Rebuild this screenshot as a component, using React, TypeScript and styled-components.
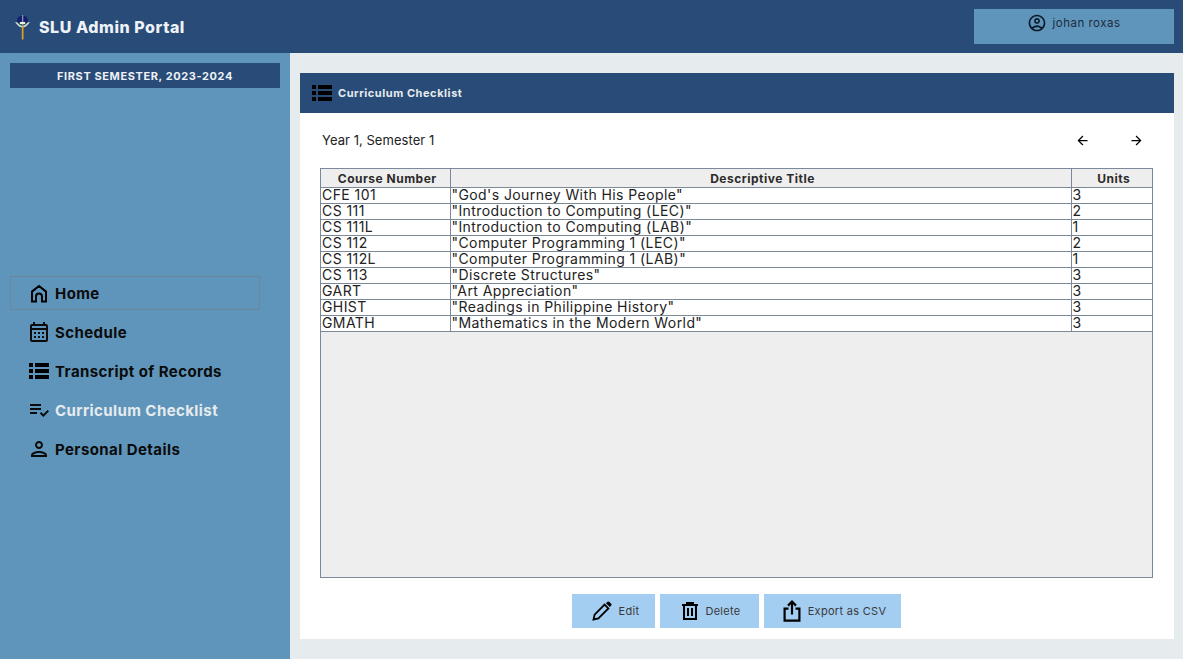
import React from "react";
import styled, { createGlobalStyle } from "styled-components";
import { MdOutlinePerson, MdOutlineAccountCircle, MdArrowBack, MdArrowForward, MdOutlineCalendarMonth, MdPlaylistAddCheck } from "react-icons/md";

const Global = createGlobalStyle`
  html, body { margin: 0; padding: 0; height: 100%; }
  body { font-family: "Inter", "Open Sans", "Liberation Sans", sans-serif; background: #e6ebee; color: #111; overflow: hidden; }
  * { box-sizing: border-box; }
`;

const Page = styled.div`
  width: 1183px;
  height: 659px;
  display: flex;
  flex-direction: column;
`;

const Header = styled.header`
  height: 53px;
  flex: none;
  background: #284b78;
  display: flex;
  align-items: center;
  justify-content: space-between;
  padding: 0 9px 0 14px;
`;

const Brand = styled.div`
  display: flex;
  align-items: center;
  gap: 8px;
  color: #eef2f6;
  font-size: 16px;
  font-weight: 800;
  letter-spacing: 0.55px;
`;

const UserBox = styled.div`
  width: 200px;
  height: 35px;
  background: #5f95ba;
  display: flex;
  align-items: center;
  justify-content: center;
  gap: 5px;
  font-size: 11.5px;
  color: #1b2a3a;
  padding-bottom: 8px;
  letter-spacing: 0.5px;
`;

const Body = styled.div`
  flex: 1;
  display: flex;
  min-height: 0;
`;

const Sidebar = styled.aside`
  width: 290px;
  flex: none;
  background: #5f95ba;
  padding: 10px;
  display: flex;
  flex-direction: column;
`;

const Term = styled.div`
  height: 25px;
  width: 270px;
  background: #284b78;
  color: #eef2f6;
  font-size: 11px;
  font-weight: 700;
  display: flex;
  align-items: center;
  justify-content: center;
  letter-spacing: 0.6px;
`;

const Nav = styled.nav`
  margin-top: 188px;
  display: flex;
  flex-direction: column;
  gap: 5px;
`;

const NavItem = styled.div<{ $active?: boolean; $boxed?: boolean }>`
  width: 250px;
  height: 34px;
  display: flex;
  align-items: center;
  gap: 4px;
  padding-left: 16px;
  font-size: 15px;
  font-weight: 700;
  letter-spacing: 0.42px;
  color: ${(p) => (p.$active ? "#e6ebee" : "#0b0b0b")};
  border: 1px solid ${(p) => (p.$boxed ? "#6d8699" : "transparent")};
`;

const NavIcon = styled.span`
  width: 24px;
  display: flex;
  align-items: center;
  justify-content: center;
  font-size: 24px;
  color: #0b0b0b;
`;

const Main = styled.main`
  flex: 1;
  padding: 20px 9px 20px 10px;
  display: flex;
  min-width: 0;
`;

const Card = styled.section`
  flex: 1;
  background: #fff;
  display: flex;
  flex-direction: column;
`;

const CardHeader = styled.div`
  height: 40px;
  flex: none;
  background: #284b78;
  display: flex;
  align-items: center;
  gap: 6px;
  padding-left: 12px;
  color: #e6ebee;
  font-size: 11px;
  font-weight: 700;
  letter-spacing: 0.55px;
`;

const CardBody = styled.div`
  flex: 1;
  padding: 0 21px 0 20px;
  display: flex;
  flex-direction: column;
  min-height: 0;
`;

const YearBar = styled.div`
  height: 55px;
  flex: none;
  display: flex;
  align-items: center;
  justify-content: space-between;
  padding: 0 9px 1px 2px;
  font-size: 13px;
  letter-spacing: 0.05px;
  color: #222;
`;

const Arrows = styled.div`
  display: flex;
  gap: 39px;
  font-size: 15px;
  color: #000;
`;

const ArrowBtn = styled.span`
  display: flex;
`;

const TableFrame = styled.div`
  height: 410px;
  flex: none;
  border: 1px solid #7b8a9b;
  background: #eeeeee;
`;

const Table = styled.table`
  width: 100%;
  border-collapse: collapse;
  table-layout: fixed;
  background: #fff;
`;

const Th = styled.th<{ $w?: number }>`
  width: ${(p) => (p.$w ? `${p.$w}px` : "auto")};
  height: 18px;
  padding: 1px 0 0 4px;
  background: #eeeeee;
  border: 1px solid #7b8a9b;
  border-top: 0;
  font-size: 12px;
  font-weight: 700;
  color: #2b2b2b;
  letter-spacing: 0.5px;
  &:first-child { border-left: 0; }
  &:last-child { border-right: 0; }
`;

const Td = styled.td`
  height: 16px;
  padding: 0 0 0 1px;
  font-size: 14px;
  letter-spacing: 0.42px;
  line-height: 14px;
  border: 1px solid #7b8a9b;
  white-space: nowrap;
  overflow: hidden;
  color: #222;
  &:first-child { border-left: 0; }
  &:last-child { border-right: 0; }
`;

const Actions = styled.div`
  flex: 1;
  display: flex;
  justify-content: center;
  align-items: flex-start;
  padding-top: 16px;
  gap: 5px;
`;

const ActionBtn = styled.button<{ $w: number }>`
  width: ${(p) => p.$w}px;
  height: 34px;
  border: 0;
  background: #a3cdf1;
  display: flex;
  align-items: center;
  justify-content: center;
  gap: 7px;
  font: inherit;
  font-size: 11px;
  color: #3a3a3a;
  padding: 0 0 0 4px;
  letter-spacing: 0.3px;
`;

const LogoMark = styled.svg`
  flex: none;
`;

const Stroke = styled.svg`
  display: block;
  flex: none;
  fill: none;
  stroke: #000;
`;

const ListGlyph = styled.svg`
  display: block;
  flex: none;
  fill: #000;
`;

const ListIcon = () => (
  <ListGlyph width="20" height="16" viewBox="0 0 20 16">
    <rect x="0" y="0" width="4" height="4" />
    <rect x="6" y="0" width="14" height="4" />
    <rect x="0" y="6" width="4" height="4" />
    <rect x="6" y="6" width="14" height="4" />
    <rect x="0" y="12" width="4" height="4" />
    <rect x="6" y="12" width="14" height="4" />
  </ListGlyph>
);

const HomeIcon = () => (
  <Stroke width="18" height="19" viewBox="0 0 18 19" strokeWidth="2">
    <path d="M2 17.5 V7.6 L9 2 L16 7.6 V17.5 H12 V12.5 a3 3 0 0 0 -6 0 V17.5 Z" />
  </Stroke>
);

const PencilIcon = () => (
  <Stroke width="20" height="20" viewBox="0 0 20 20" strokeWidth="1.8">
    <path d="M1.5 18.5 L2.6 13.6 L12.6 3.6 L16.4 7.4 L6.4 17.4 Z" />
    <path d="M14 2.2 L15.2 1 a1.6 1.6 0 0 1 2.2 0 L19 2.6 a1.6 1.6 0 0 1 0 2.2 L17.8 6 Z" fill="#000" stroke="none" />
  </Stroke>
);

const TrashIcon = () => (
  <Stroke width="16" height="18" viewBox="0 0 16 18" strokeWidth="2">
    <path d="M0 3 H16 M5 3 V1 H11 V3 M2 3 V17 H14 V3 M6 6 V14 M10 6 V14" />
  </Stroke>
);

const ExportIcon = () => (
  <Stroke width="18" height="22" viewBox="0 0 18 22" strokeWidth="2.2">
    <path d="M5.5 8.6 H1.6 V20.6 H16.4 V8.6 H12.5 M9 14.5 V2 M5 5.6 L9 1.6 L13 5.6" />
  </Stroke>
);

const rows: [string, string, string][] = [
  ["CFE 101", `"God's Journey With His People"`, "3"],
  ["CS 111", `"Introduction to Computing (LEC)"`, "2"],
  ["CS 111L", `"Introduction to Computing (LAB)"`, "1"],
  ["CS 112", `"Computer Programming 1 (LEC)"`, "2"],
  ["CS 112L", `"Computer Programming 1 (LAB)"`, "1"],
  ["CS 113", `"Discrete Structures"`, "3"],
  ["GART", `"Art Appreciation"`, "3"],
  ["GHIST", `"Readings in Philippine History"`, "3"],
  ["GMATH", `"Mathematics in the Modern World"`, "3"],
];

export default function App() {
  return (
    <Page>
      <Global />
      <Header>
        <Brand>
          <LogoMark width="17" height="26" viewBox="0 0 17 26">
            <circle cx="8.5" cy="7" r="5.5" fill="#14206e" />
            <path d="M1 8 Q8.5 19 16 8 L13.5 8.5 Q8.5 15 3.5 8.5 Z" fill="#d5dcd6" />
            <path d="M4 9 Q8.5 14 13 9 L8.5 7.5 Z" fill="#2c6b52" />
            <rect x="8" y="1" width="1.3" height="11" fill="#8a90a8" />
            <rect x="7.8" y="12" width="1.7" height="13.5" fill="#e0a21c" />
            <rect x="6" y="8" width="5" height="2" fill="#f0f0e0" />
          </LogoMark>
          SLU Admin Portal
        </Brand>
        <UserBox>
          <MdOutlineAccountCircle size={20} color="#0c1a28" />
          johan roxas
        </UserBox>
      </Header>
      <Body>
        <Sidebar>
          <Term>FIRST SEMESTER, 2023-2024</Term>
          <Nav>
            <NavItem $boxed>
              <NavIcon><HomeIcon /></NavIcon>Home
            </NavItem>
            <NavItem>
              <NavIcon><MdOutlineCalendarMonth /></NavIcon>Schedule
            </NavItem>
            <NavItem>
              <NavIcon><ListIcon /></NavIcon>Transcript of Records
            </NavItem>
            <NavItem $active>
              <NavIcon><MdPlaylistAddCheck /></NavIcon>Curriculum Checklist
            </NavItem>
            <NavItem>
              <NavIcon><MdOutlinePerson /></NavIcon>Personal Details
            </NavItem>
          </Nav>
        </Sidebar>
        <Main>
          <Card>
            <CardHeader>
              <ListIcon />
              Curriculum Checklist
            </CardHeader>
            <CardBody>
              <YearBar>
                Year 1, Semester 1
                <Arrows>
                  <ArrowBtn><MdArrowBack /></ArrowBtn>
                  <ArrowBtn><MdArrowForward /></ArrowBtn>
                </Arrows>
              </YearBar>
              <TableFrame>
                <Table>
                  <thead>
                    <tr>
                      <Th $w={129}>Course Number</Th>
                      <Th>Descriptive Title</Th>
                      <Th $w={81}>Units</Th>
                    </tr>
                  </thead>
                  <tbody>
                    {rows.map((r) => (
                      <tr key={r[0]}>
                        <Td>{r[0]}</Td>
                        <Td>{r[1]}</Td>
                        <Td>{r[2]}</Td>
                      </tr>
                    ))}
                  </tbody>
                </Table>
              </TableFrame>
              <Actions>
                <ActionBtn $w={83}>
                  <PencilIcon />Edit
                </ActionBtn>
                <ActionBtn $w={99}>
                  <TrashIcon />Delete
                </ActionBtn>
                <ActionBtn $w={137}>
                  <ExportIcon />Export as CSV
                </ActionBtn>
              </Actions>
            </CardBody>
          </Card>
        </Main>
      </Body>
    </Page>
  );
}
